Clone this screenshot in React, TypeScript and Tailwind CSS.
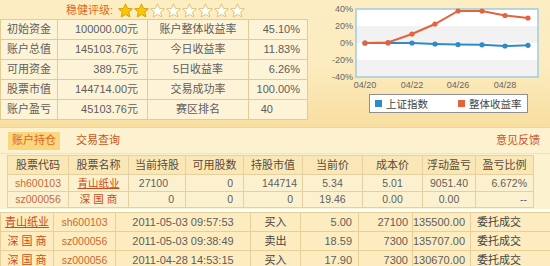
const summary = [
  ['初始资金', '100000.00元', '账户整体收益率', '45.10%'],
  ['账户总值', '145103.76元', '今日收益率', '11.83%'],
  ['可用资金', '389.75元', '5日收益率', '6.26%'],
  ['股票市值', '144714.00元', '交易成功率', '100.00%'],
  ['账户盈亏', '45103.76元', '赛区排名', '40'],
]

const holdings = [
  { code: 'sh600103', name: '青山纸业', link: true, qty: '27100', avail: '0', value: '144714', price: '5.34', cost: '5.01', pnl: '9051.40', ratio: '6.672%' },
  { code: 'sz000056', name: '深 国 商', link: false, qty: '0', avail: '0', value: '0', price: '19.46', cost: '0.00', pnl: '0.00', ratio: '--' },
]

const trades = [
  { name: '青山纸业', link: true, code: 'sh600103', time: '2011-05-03 09:57:53', side: '买入', price: '5.00', qty: '27100', amount: '135500.00' },
  { name: '深 国 商', link: false, code: 'sz000056', time: '2011-05-03 09:38:49', side: '卖出', price: '18.59', qty: '7300', amount: '135707.00' },
  { name: '深 国 商', link: false, code: 'sz000056', time: '2011-04-28 14:53:15', side: '买入', price: '17.90', qty: '7300', amount: '130670.00' },
]

const xs = [58, 81, 105, 128, 151, 175, 198, 221]
const redY = [43, 42.5, 34, 24, 11, 11, 15.5, 18]
const blueY = [43, 43, 43, 44, 44.5, 44.8, 46, 45.3]

function Star({ filled }: { filled: boolean }) {
  return (
    <svg width="15" height="15" viewBox="0 0 24 24">
      <polygon
        points="12,1.5 15.2,8.6 23,9.3 17.1,14.5 18.9,22.3 12,18.2 5.1,22.3 6.9,14.5 1,9.3 8.8,8.6"
        fill={filled ? '#f8c808' : '#ffffff'}
        stroke={filled ? '#d8a000' : '#dcc283'}
        strokeWidth="1.6"
        strokeLinejoin="round"
      />
    </svg>
  )
}

function Chart() {
  const line = (ys: number[]) => xs.map((x, i) => `${x},${ys[i]}`).join(' ')
  return (
    <svg width="243" height="127" viewBox="0 0 243 127">
      <rect x="49" y="9" width="182" height="17" fill="#ffffff" />
      <rect x="49" y="26" width="182" height="17" fill="#f2f2f2" />
      <rect x="49" y="43" width="182" height="17" fill="#ffffff" />
      <rect x="49" y="60" width="182" height="17" fill="#f2f2f2" />
      <rect x="49" y="9" width="182" height="68" fill="none" stroke="#9fcbe0" strokeWidth="1.5" />
      <g fontSize="9" fill="#666" textAnchor="end" fontFamily="Liberation Sans, sans-serif">
        <text x="46" y="12">40%</text>
        <text x="46" y="29">20%</text>
        <text x="46" y="46">0%</text>
        <text x="46" y="63">-20%</text>
        <text x="46" y="80">-40%</text>
      </g>
      <g fontSize="9" fill="#666" textAnchor="middle" fontFamily="Liberation Sans, sans-serif">
        <text x="58" y="88">04/20</text>
        <text x="105" y="88">04/22</text>
        <text x="151" y="88">04/26</text>
        <text x="198" y="88">04/28</text>
      </g>
      <polyline points={line(blueY)} fill="none" stroke="#2f8ac8" strokeWidth="2" />
      {xs.map((x, i) => <circle key={`b${i}`} cx={x} cy={blueY[i]} r="2.6" fill="#2f8ac8" />)}
      <polyline points={line(redY)} fill="none" stroke="#e4633d" strokeWidth="2" />
      {xs.map((x, i) => <circle key={`r${i}`} cx={x} cy={redY[i]} r="2.6" fill="#e4633d" />)}
      <rect x="62.5" y="94.5" width="158" height="18" fill="#ffffff" stroke="#8f8f8f" />
      <rect x="68" y="100" width="7" height="7" fill="#2f8ac8" />
      <text x="79" y="107.5" fontSize="10.5" fill="#444" fontFamily="Noto Sans CJK SC, sans-serif">上证指数</text>
      <rect x="151" y="100" width="7" height="7" fill="#e4633d" />
      <text x="162" y="107.5" fontSize="10.5" fill="#444" fontFamily="Noto Sans CJK SC, sans-serif">整体收益率</text>
    </svg>
  )
}

export default function App() {
  const td = 'border border-[#e3cb92] h-[20px] px-0'
  const cell2 = 'border border-[#e6d0a0] px-0'
  const cell3 = 'border border-[#e8cf98] px-0'
  return (
    <div
      className="w-[550px] h-[266px] overflow-hidden bg-[#fdf2cf] text-[11px] leading-none text-[#5e5e5e]"
      style={{ fontFamily: '"Liberation Sans", "Noto Sans CJK SC", sans-serif' }}
    >
      <section className="flex h-[128px] bg-gradient-to-b from-[#fcedc2] via-[#fcecc0] to-[#f8dea0] border-b border-[#f1d595]">
        <div className="w-[307px]">
          <div className="flex h-[19px] items-center justify-center gap-[1px] pt-[1px] pl-[4px]">
            <span className="mr-[4px] text-[#e0691c]">稳健评级:</span>
            {[0, 1, 2, 3, 4, 5, 6, 7].map(i => (
              <Star key={i} filled={i < 2} />
            ))}
          </div>
          <table className="w-[307px] table-fixed border-collapse bg-[#fdf3d6]">
            <colgroup>
              <col className="w-[57px]" />
              <col className="w-[90px]" />
              <col className="w-[101px]" />
              <col className="w-[59px]" />
            </colgroup>
            <tbody>
              {summary.map(r => (
                <tr key={r[0]}>
                  <td className={`${td} text-center`}>{r[0]}</td>
                  <td className={`${td} text-right pr-[9px]`}>{r[1]}</td>
                  <td className={`${td} text-center`}>{r[2]}</td>
                  <td className={`${td} text-right ${r[3] === '40' ? 'pr-[34px]' : 'pr-[7px]'}`}>{r[3]}</td>
                </tr>
              ))}
            </tbody>
          </table>
        </div>
        <div className="flex-1">
          <Chart />
        </div>
      </section>

      <div className="flex h-[26px] items-center border-b border-[#f3e2b8] pl-[8px] pr-[10px]">
        <span className="flex h-[18px] items-center bg-[#fad67f] px-[4px] text-[#e0661a]">账户持仓</span>
        <span className="ml-[16px] text-[#c05a22]">交易查询</span>
        <span className="ml-auto text-[#c8561e]">意见反馈</span>
      </div>

      <div className="pl-[7px] pt-[1px]">
        <table className="w-[526px] table-fixed border-collapse bg-[#fcf1cf]">
          <colgroup>
            <col className="w-[61px]" />
            <col className="w-[60px]" />
            <col className="w-[57px]" />
            <col className="w-[58px]" />
            <col className="w-[59px]" />
            <col className="w-[60px]" />
            <col className="w-[60px]" />
            <col className="w-[53px]" />
            <col className="w-[58px]" />
          </colgroup>
          <thead>
            <tr className="h-[19px] bg-[#fae7b6] text-[#5a4a3a]">
              {['股票代码', '股票名称', '当前持股', '可用股数', '持股市值', '当前价', '成本价', '浮动盈亏', '盈亏比例'].map(h => (
                <th key={h} className={`${cell2} font-normal text-center`}>{h}</th>
              ))}
            </tr>
          </thead>
          <tbody>
            {holdings.map(h => (
              <tr key={h.code} className="h-[16.5px] text-[10.5px]">
                <td className={`${cell2} text-center text-[#c86a38]`}>{h.code}</td>
                <td className={`${cell2} text-center text-[#cc4a14] ${h.link ? 'underline' : ''}`}>{h.name}</td>
                <td className={`${cell2} text-right ${h.link ? 'pr-[17px]' : 'pr-[11px]'}`}>{h.qty}</td>
                <td className={`${cell2} text-right pr-[10px]`}>{h.avail}</td>
                <td className={`${cell2} text-right ${h.link ? 'pr-[5px]' : 'pr-[9px]'}`}>{h.value}</td>
                <td className={`${cell2} text-center`}>{h.price}</td>
                <td className={`${cell2} text-center`}>{h.cost}</td>
                <td className={`${cell2} text-center`}>{h.pnl}</td>
                <td className={`${cell2} text-right pr-[6px]`}>{h.ratio}</td>
              </tr>
            ))}
          </tbody>
        </table>
      </div>

      <div className="mt-[1px] h-[3px] bg-white" />

      <table className="w-[550px] table-fixed border-collapse bg-[#fdecbf]">
        <colgroup>
          <col className="w-[53px]" />
          <col className="w-[62px]" />
          <col className="w-[135px]" />
          <col className="w-[50px]" />
          <col className="w-[58px]" />
          <col className="w-[54px]" />
          <col className="w-[58px]" />
          <col className="w-[80px]" />
        </colgroup>
        <tbody>
          {trades.map((t, i) => (
            <tr key={i} className="h-[19px]">
              <td className={`${cell3} text-center text-[#cc4a14] ${t.link ? 'underline' : ''}`}>{t.name}</td>
              <td className={`${cell3} text-center text-[10.5px] text-[#c86a38]`}>{t.code}</td>
              <td className={`${cell3} text-center`}>{t.time}</td>
              <td className={`${cell3} text-center text-[#444]`}>{t.side}</td>
              <td className={`${cell3} text-right pr-[6px]`}>{t.price}</td>
              <td className={`${cell3} text-right pr-[4px]`}>{t.qty}</td>
              <td className={`${cell3} text-right pr-[7px]`}>{t.amount}</td>
              <td className={`${cell3} text-left pl-[6px] text-[#444]`}>委托成交</td>
            </tr>
          ))}
        </tbody>
      </table>
    </div>
  )
}
